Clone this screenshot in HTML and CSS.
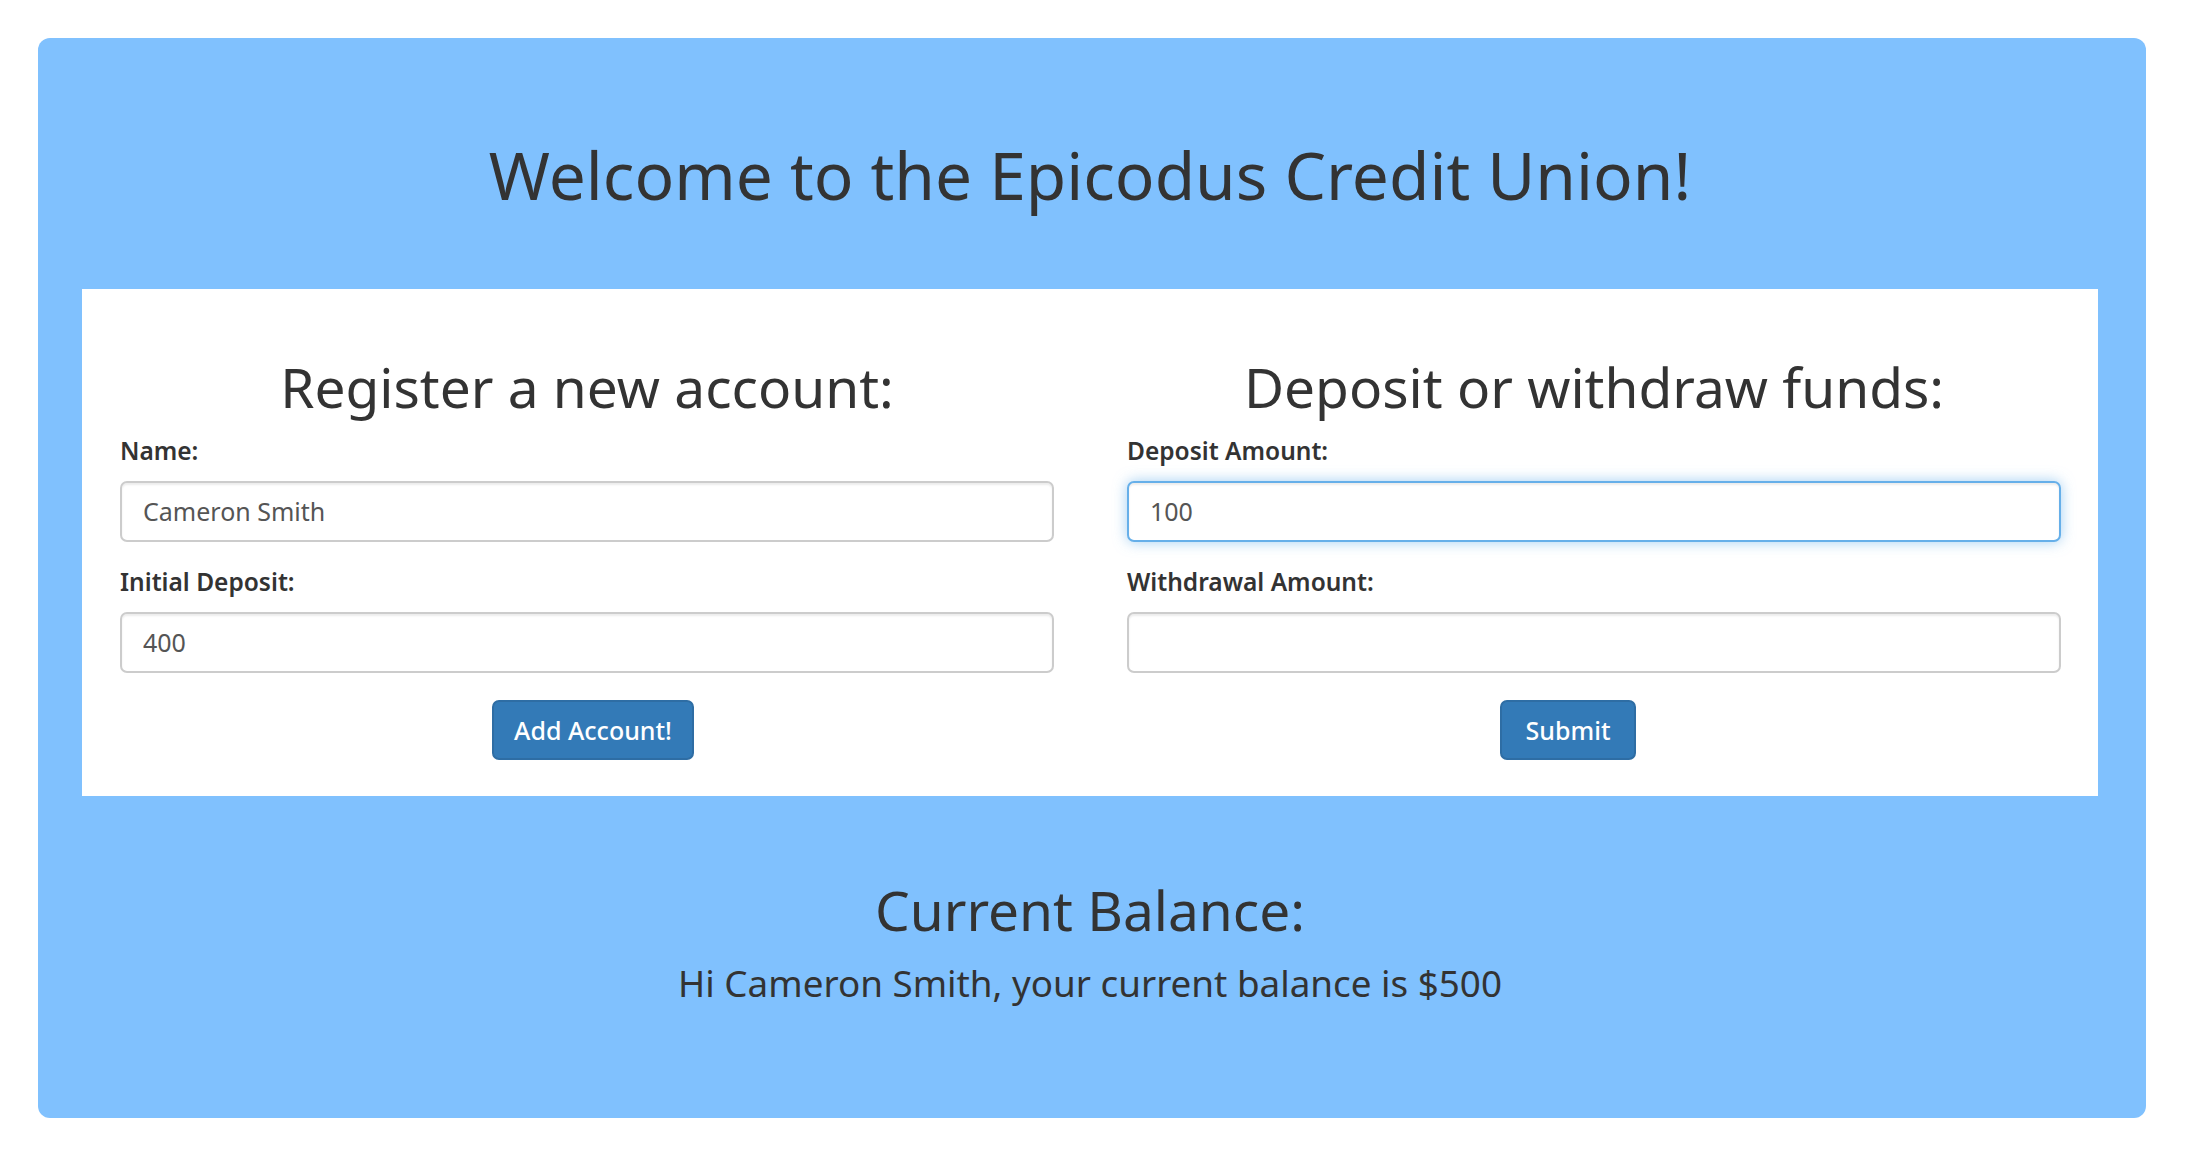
FILE: index.html
```html
<!DOCTYPE html>
<html lang="en">
<head>
<meta charset="utf-8">
<title>Epicodus Credit Union</title>
<link rel="stylesheet" href="styles.css">
</head>
<body>
<div class="jumbotron">
  <h1 class="title">Welcome to the Epicodus Credit Union!</h1>
  <div class="panel">
    <form class="column">
      <h2 class="col-title">Register a new account:</h2>
      <div class="form-group">
        <label class="label" for="name">Name:</label>
        <input class="input" id="name" type="text" value="Cameron Smith">
      </div>
      <div class="form-group">
        <label class="label" for="initial">Initial Deposit:</label>
        <input class="input" id="initial" type="text" value="400">
      </div>
      <div class="actions actions-left">
        <button class="btn" type="button">Add Account!</button>
      </div>
    </form>
    <form class="column">
      <h2 class="col-title">Deposit or withdraw funds:</h2>
      <div class="form-group">
        <label class="label" for="deposit">Deposit Amount:</label>
        <input class="input input-focus" id="deposit" type="text" value="100">
      </div>
      <div class="form-group">
        <label class="label" for="withdraw">Withdrawal Amount:</label>
        <input class="input" id="withdraw" type="text" value="">
      </div>
      <div class="actions actions-right">
        <button class="btn btn-submit" type="button">Submit</button>
      </div>
    </form>
  </div>
  <div class="balance">
    <h2 class="col-title">Current Balance:</h2>
    <p class="balance-text">Hi Cameron Smith, your current balance is $500</p>
  </div>
</div>
</body>
</html>
```
FILE: styles.css
```css
* { box-sizing: border-box; }

body {
  margin: 0;
  background: #ffffff;
  font-family: "Noto Sans", "Open Sans", sans-serif;
  color: #333333;
}

.jumbotron {
  margin: 38px 40px 0 38px;
  padding: 101px 48px 108px 44px;
  background: #80c1fe;
  border-radius: 12px;
}

.title {
  margin: 0 0 78px;
  font-size: 65.8px;
  font-weight: 400;
  line-height: 1.1;
  text-align: center;
}

.panel {
  background: #ffffff;
  padding: 68px 37px 36px 38px;
  display: grid;
  grid-template-columns: 1fr 1fr;
  column-gap: 73px;
}

.column { margin: 0; }

.col-title {
  margin: 0 0 16px;
  font-size: 55px;
  font-weight: 400;
  line-height: 1.1;
  text-align: center;
}

.form-group { margin-bottom: 23px; }

.label {
  display: block;
  margin-bottom: 12px;
  font-size: 24.5px;
  font-weight: 600;
  line-height: 1.42857;
  color: #333333;
}

.input {
  display: block;
  width: 100%;
  height: 61px;
  padding: 0 21px;
  font-family: inherit;
  font-size: 25px;
  color: #555555;
  background: #ffffff;
  border: 2px solid #cccccc;
  border-radius: 7px;
  box-shadow: inset 0 2px 2px rgba(0, 0, 0, 0.075);
  outline: none;
}

.input-focus {
  border-color: #66afe9;
  box-shadow: inset 0 2px 2px rgba(0, 0, 0, 0.075), 0 0 14px rgba(102, 175, 233, 0.6);
}

.actions {
  display: flex;
  justify-content: center;
  padding-top: 4px;
}

.actions-left .btn { margin-left: 12px; }
.actions-right .btn { margin-right: 52px; }

.btn {
  height: 60px;
  padding: 0 20px;
  font-family: inherit;
  font-size: 25px;
  font-weight: 500;
  color: #ffffff;
  background: #337ab7;
  border: 2px solid #2e6da4;
  border-radius: 7px;
  cursor: pointer;
}

.btn-submit { padding: 0 24px; }

.balance {
  padding-top: 84px;
  text-align: center;
}

.balance .col-title { margin-bottom: 17px; }

.balance-text {
  margin: 0;
  font-size: 36.8px;
  line-height: 1.42857;
}
```
